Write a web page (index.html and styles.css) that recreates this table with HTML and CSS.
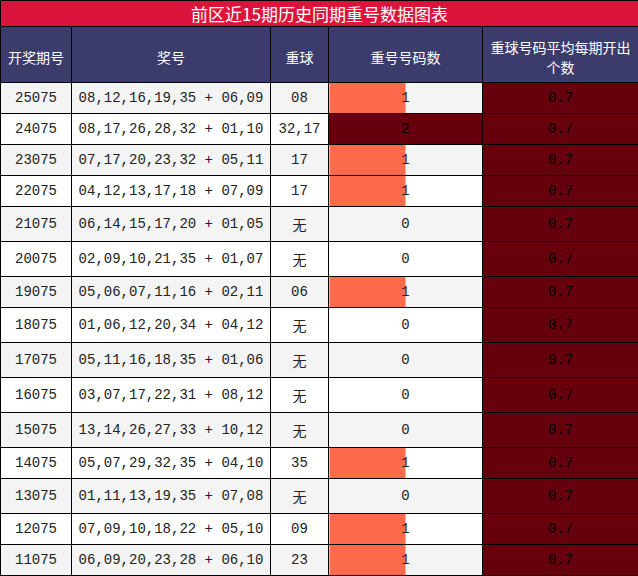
FILE: index.html
```html
<!DOCTYPE html>
<html lang="zh">
<head>
<meta charset="utf-8">
<title>前区近15期历史同期重号数据图表</title>
<link rel="stylesheet" href="styles.css">
</head>
<body>
<table class="chart">
  <colgroup>
    <col class="c-issue">
    <col class="c-nums">
    <col class="c-rep">
    <col class="c-count">
    <col class="c-avg">
  </colgroup>
  <thead>
    <tr><th colspan="5" class="title">前区近15期历史同期重号数据图表</th></tr>
    <tr class="head">
      <th>开奖期号</th>
      <th>奖号</th>
      <th>重球</th>
      <th>重号号码数</th>
      <th>重球号码平均每期开出个数</th>
    </tr>
  </thead>
  <tbody>
    <tr><td>25075</td><td>08,12,16,19,35 + 06,09</td><td>08</td><td class="bar">1</td><td class="avg">0.7</td></tr>
    <tr><td>24075</td><td>08,17,26,28,32 + 01,10</td><td>32,17</td><td class="max">2</td><td class="avg">0.7</td></tr>
    <tr><td>23075</td><td>07,17,20,23,32 + 05,11</td><td>17</td><td class="bar">1</td><td class="avg">0.7</td></tr>
    <tr><td>22075</td><td>04,12,13,17,18 + 07,09</td><td>17</td><td class="bar">1</td><td class="avg">0.7</td></tr>
    <tr class="tall"><td>21075</td><td>06,14,15,17,20 + 01,05</td><td class="none">无</td><td>0</td><td class="avg">0.7</td></tr>
    <tr class="tall"><td>20075</td><td>02,09,10,21,35 + 01,07</td><td class="none">无</td><td>0</td><td class="avg">0.7</td></tr>
    <tr><td>19075</td><td>05,06,07,11,16 + 02,11</td><td>06</td><td class="bar">1</td><td class="avg">0.7</td></tr>
    <tr class="tall"><td>18075</td><td>01,06,12,20,34 + 04,12</td><td class="none">无</td><td>0</td><td class="avg">0.7</td></tr>
    <tr class="tall"><td>17075</td><td>05,11,16,18,35 + 01,06</td><td class="none">无</td><td>0</td><td class="avg">0.7</td></tr>
    <tr class="tall"><td>16075</td><td>03,07,17,22,31 + 08,12</td><td class="none">无</td><td>0</td><td class="avg">0.7</td></tr>
    <tr class="tall"><td>15075</td><td>13,14,26,27,33 + 10,12</td><td class="none">无</td><td>0</td><td class="avg">0.7</td></tr>
    <tr><td>14075</td><td>05,07,29,32,35 + 04,10</td><td>35</td><td class="bar">1</td><td class="avg">0.7</td></tr>
    <tr class="tall"><td>13075</td><td>01,11,13,19,35 + 07,08</td><td class="none">无</td><td>0</td><td class="avg">0.7</td></tr>
    <tr><td>12075</td><td>07,09,10,18,22 + 05,10</td><td>09</td><td class="bar">1</td><td class="avg">0.7</td></tr>
    <tr><td>11075</td><td>06,09,20,23,28 + 06,10</td><td>23</td><td class="bar">1</td><td class="avg">0.7</td></tr>
  </tbody>
</table>
</body>
</html>
```

FILE: styles.css
```css
html, body {
  margin: 0;
  padding: 0;
  background: #ffffff;
}

.chart {
  width: 638px;
  table-layout: fixed;
  border-collapse: collapse;
  border: 1px solid #000;
}

.c-issue { width: 71px; }
.c-nums { width: 199px; }
.c-rep { width: 58px; }
.c-count { width: 154px; }
.c-avg { width: 156px; }

.chart th,
.chart td {
  border: 1px solid #000;
  text-align: center;
  vertical-align: middle;
}

.title {
  background: #dc143c;
  color: #fff;
  font-family: "Noto Sans CJK SC", sans-serif;
  font-size: 17px;
  font-weight: normal;
  height: 25px;
  line-height: 24px;
  padding: 1px 0 0;
  box-sizing: border-box;
}

.head th {
  background: #3b3b6c;
  color: #fff;
  font-family: "Noto Sans CJK SC", sans-serif;
  font-size: 14px;
  font-weight: normal;
  line-height: 20px;
  padding: 10px 6px 5px;
}

.chart td {
  font-family: "Liberation Mono", "Noto Sans CJK SC", monospace;
  font-size: 14px;
  line-height: 16px;
  color: #222;
  padding: 7px 4px;
}

.chart tbody tr:nth-child(odd) { background: #f4f4f4; }
.chart tbody tr:nth-child(even) { background: #ffffff; }

.chart tr.tall td { padding-top: 9px; padding-bottom: 9px; }

.chart tr.tall td.none {
  font-family: "Noto Sans CJK SC", sans-serif;
  padding-top: 9px;
  padding-bottom: 9px;
}

.chart td.bar {
  background-image: linear-gradient(90deg, #fb6a4a 50%, transparent 50%);
}

.chart td.max {
  background: #67000d;
  color: #000;
}

.chart td.avg {
  background: #67000d;
  color: #000;
}
```
